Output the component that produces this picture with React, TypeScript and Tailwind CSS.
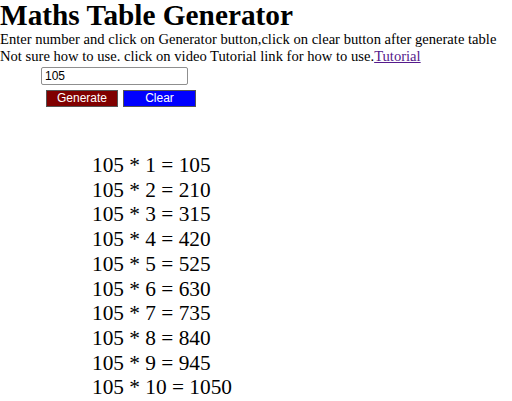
import { useState } from "react";

export default function App() {
  const [num, setNum] = useState("105");
  const [rows, setRows] = useState<number[]>(() => Array.from({ length: 10 }, (_, i) => i + 1));

  const generate = () => setRows(Array.from({ length: 10 }, (_, i) => i + 1));
  const clear = () => {
    setRows([]);
    setNum("");
  };

  const n = Number(num) || 0;

  return (
    <div className="min-h-[401px] bg-white text-black font-['Liberation_Serif','Times_New_Roman',serif]">
      <h1 className="m-0 text-[29.3px] leading-[30px] font-bold">Maths Table Generator</h1>
      <p className="mt-[1px] text-[14.6px] leading-[17px] whitespace-nowrap">
        Enter number and click on Generator button,click on clear button after generate table
      </p>
      <p className="text-[14.6px] leading-[17px] whitespace-nowrap">
        Not sure how to use. click on video Tutorial link for how to use.
        <a href="#" className="text-[#551a8b] underline">
          Tutorial
        </a>
      </p>
      <div className="mt-[2px] pl-[41px]">
        <input
          value={num}
          onChange={(e) => setNum(e.target.value)}
          className="block w-[147px] h-[18px] border border-[#8f8f8f] rounded-[2px] px-[3px] text-[12px] leading-[16px] font-['Liberation_Sans',Arial,sans-serif] outline-none"
        />
      </div>
      <div className="mt-[5px] pl-[46px] flex gap-[5px]">
        <button
          type="button"
          onClick={generate}
          className="w-[72px] h-[17px] bg-[#800000] text-white border border-[#555] text-[12px] leading-[15px] font-['Liberation_Sans',Arial,sans-serif]"
        >
          Generate
        </button>
        <button
          type="button"
          onClick={clear}
          className="w-[73px] h-[17px] bg-[#0000ff] text-white border border-[#555] text-[12px] leading-[15px] font-['Liberation_Sans',Arial,sans-serif]"
        >
          Clear
        </button>
      </div>
      <div className="mt-[46px] pl-[92px] text-[21.33px] leading-[24.7px]">
        {rows.map((i) => (
          <div key={i}>
            {n} * {i} = {n * i}
          </div>
        ))}
      </div>
    </div>
  );
}
